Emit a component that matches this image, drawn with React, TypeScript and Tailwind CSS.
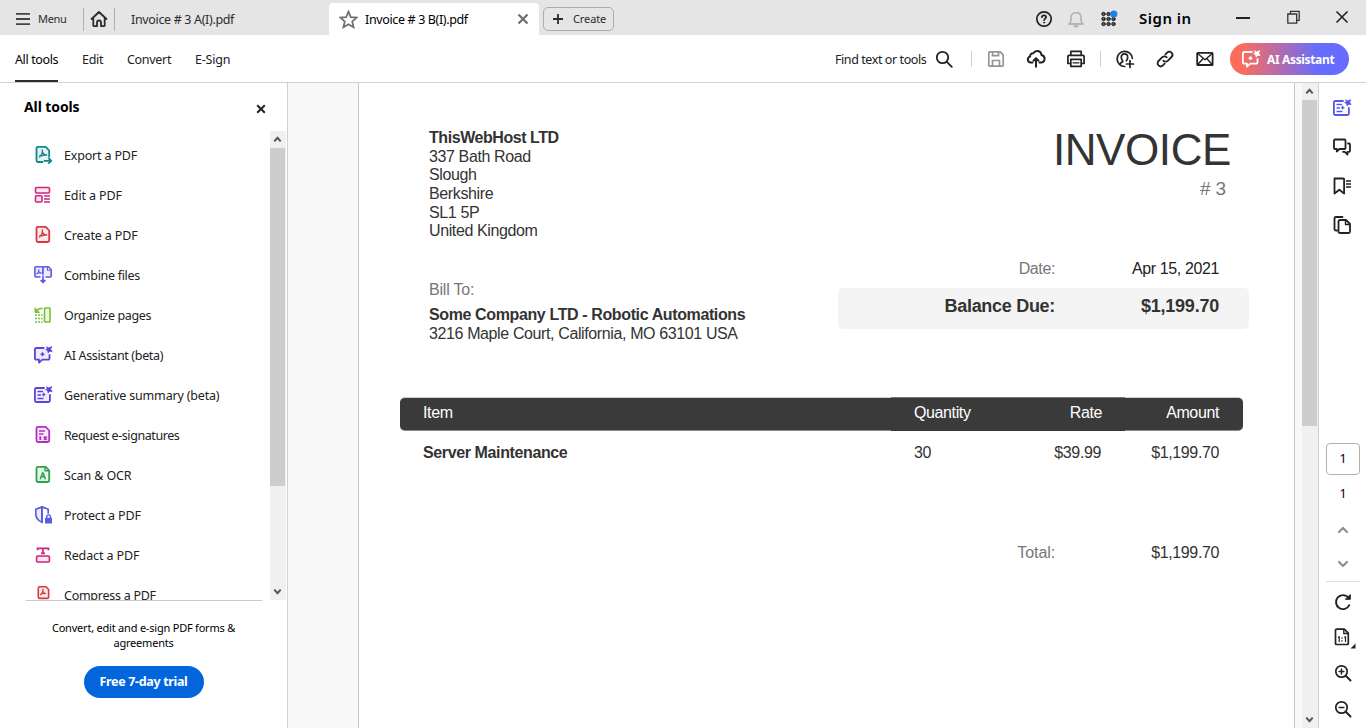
import type { ReactNode } from "react";

type SvgProps = { children: ReactNode; className?: string; w?: number; h?: number; sw?: number };

function Svg({ children, className = "", w = 20, h = 20, sw = 1.8 }: SvgProps) {
  return (
    <svg
      width={w}
      height={h}
      viewBox={`0 0 ${w} ${h}`}
      fill="none"
      stroke="currentColor"
      strokeWidth={sw}
      strokeLinecap="round"
      strokeLinejoin="round"
      className={`block shrink-0 ${className}`}
    >
      {children}
    </svg>
  );
}

const acrobatMark = (
  <path
    d="M9.300 5c.3 2-.6 5-2.700 7M9.400 7c.6 2 2 3 4.300 3M6.800 11l6.600-1.200"
    strokeWidth={1.300}
  />
);

const docShape = "M5 1.800h7.700l3.500 3.700v10a1.500 1.500 0 0 1-1.500 1.500H5a1.500 1.500 0 0 1-1.500-1.500v-12.200a1.500 1.500 0 0 1 1.500-1.500z";

function ExportIcon() {
  return (
    <Svg className="text-[#12868b]">
      <path d={docShape} fill="#e3f2f3" stroke="none" />
      <path d="M9.500 17H5a1.500 1.500 0 0 1-1.500-1.500v-12.200a1.500 1.500 0 0 1 1.500-1.500h7.700l3.500 3.700v6.200" />
      {acrobatMark}
      <path d="M11.500 15.800h6.500M15.900 13.500l2.400 2.300-2.400 2.300" />
    </Svg>
  );
}

function EditIcon() {
  return (
    <Svg className="text-[#cd2680]" sw={1.6}>
      <rect x="2.500" y="2.500" width="14" height="5.500" rx="1" fill="#fbe4f0" />
      <rect x="2.500" y="10.800" width="6.500" height="6.200" rx="1" fill="#fbe4f0" />
      <path d="M11 11h6M11 14h6M11 17h6" strokeWidth={1.500} strokeLinecap="butt" />
    </Svg>
  );
}

function CreateIcon() {
  return (
    <Svg className="text-[#d7373f]">
      <path d={docShape} fill="#fdeaea" />
      {acrobatMark}
    </Svg>
  );
}

function CombineIcon() {
  return (
    <Svg className="text-[#5c5ce0]" sw={1.6}>
      <path d="M7 12H2.900a1 1 0 0 1-1-1V2.800a1 1 0 0 1 1-1h6.100a1 1 0 0 1 1 1V9" fill="#ebebff" />
      <path d="M10 9V2.800a1 1 0 0 1 1-1h4.500l2.700 2.700V11a1 1 0 0 1-1 1H13" fill="#ebebff" />
      <path d="M14.500 2v3.200h3.500M5.800 4.500c.1 2-.7 3.500-2 4.300M5.900 6.500c.6 1 1.500 1.500 2.400 1.500M4.500 8.300l3.500-.5" strokeWidth={1.1} />
      <path d="M10 11v6M8 15.500l2 2 2-2z" strokeWidth={1.700} />
    </Svg>
  );
}

function OrganizeIcon() {
  return (
    <Svg className="text-[#77c33c]" sw={1.6}>
      <rect x="11.500" y="3" width="5.500" height="14" rx=".6" fill="#eefae3" />
      <path d="M2 10h7.500M2 13.500h7.500M2 17h7.500" strokeDasharray="2 1" strokeLinecap="butt" strokeWidth={1.500} />
      <path d="M3.200 6.200C4.500 3.800 6.500 3.400 9 3.500" />
      <path d="M2 3.200v4.300h4.300z" fill="currentColor" strokeWidth={1} />
    </Svg>
  );
}

const sparkle = (
  <path d="M13.800 2l2 1 2.800-1.300-1 2.600 1.400 2.200-2.200-.3-1.700 1.700-.4-2.300-2-1 1.700-.9z" fill="currentColor" strokeWidth={0.9} />
);

function AiIcon({ className = "text-[#5a46d6]", fill = "#efedff" }: { className?: string; fill?: string }) {
  return (
    <Svg className={className}>
      <path
        d="M10.800 3H3.300a1.400 1.400 0 0 0-1.400 1.400v8.900a1.400 1.400 0 0 0 1.400 1.400H6v3l3.300-3h5.800a1.400 1.400 0 0 0 1.400-1.400V9.800"
        fill={fill}
      />
      {sparkle}
      <path d="M9.500 7.300l.7 1.300 1.300.6-1.300.7-.7 1.300-.7-1.300-1.300-.7 1.300-.6z" fill="currentColor" strokeWidth={0.6} />
    </Svg>
  );
}

function SummaryIcon({ className = "text-[#5a46d6]", fill = "#efedff" }: { className?: string; fill?: string }) {
  return (
    <Svg className={className}>
      <path d="M11 3H3.300a1.400 1.400 0 0 0-1.400 1.400v11.200a1.400 1.400 0 0 0 1.400 1.400h12.200a1.400 1.400 0 0 0 1.400-1.400V9.800" fill={fill} />
      {sparkle}
      <path d="M5 6.500h4.500M5 10h2.500M5 13.500h5" strokeWidth={1.300} />
      <path d="M10.700 7.900l.6 1.200 1.200.5-1.200.6-.6 1.200-.6-1.200-1.200-.6 1.200-.5z" fill="currentColor" strokeWidth={0.5} />
    </Svg>
  );
}

function SignIcon() {
  return (
    <Svg className="text-[#b130bd]">
      <path d={docShape} fill="#fae9fb" />
      <path d="M6 6h6M6 9h4.500" strokeWidth={1.400} strokeLinecap="butt" />
      <path d="M7.300 11.300v3.700M10.800 11.800l3 2.900M13.800 11.800l-3 2.900" strokeWidth={1.900} strokeLinecap="butt" />
    </Svg>
  );
}

function ScanIcon() {
  return (
    <Svg className="text-[#2fa14b]">
      <path d={docShape} fill="#e6f6e9" />
      <path d="M12 2v3.800h4" strokeWidth={1.400} />
      <path d="M7.300 13.800L9.800 7.500l2.500 6.300M8.200 11.800h3.200" strokeWidth={1.500} />
    </Svg>
  );
}

function ProtectIcon() {
  return (
    <Svg className="text-[#5c5ce0]" sw={1.700}>
      <path d="M9 17.300C4.800 15.500 2.800 12.500 2.800 9V4.300L9 1.900z" fill="#ebebff" />
      <path d="M9 1.900l6.200 2.400V8" />
      <path d="M9 2v15.300" />
      <rect x="12.600" y="13.300" width="5.800" height="4.700" fill="currentColor" strokeWidth={1.200} />
      <path d="M13.700 13v-1.200a1.900 1.900 0 0 1 3.800 0V13" strokeWidth={1.400} />
    </Svg>
  );
}

function RedactIcon() {
  return (
    <Svg className="text-[#cd2680]" sw={1.600}>
      <path d="M4.500 5.300V3.300h11v2M10 3.500v5M8 8.300h4" strokeWidth={1.700} strokeLinecap="butt" strokeLinejoin="miter" />
      <rect x="3.600" y="11" width="12.800" height="6" rx="1" fill="#fbe4f0" />
    </Svg>
  );
}

function CompressIcon() {
  return (
    <Svg className="text-[#d7373f]" sw={1.600}>
      <path d="M6.700 1.800h6.400l2.500 2.700v7.500a1.400 1.400 0 0 1-1.400 1.400H6.700a1.400 1.400 0 0 1-1.400-1.400V3.200a1.400 1.400 0 0 1 1.400-1.400z" fill="#fdeaea" />
      <path d="M10 4c.1 2-.8 4.500-2.500 5.800M10 6.500c.6 1.300 1.500 2 2.700 2M8 9l4.500-.5" strokeWidth={1.1} />
    </Svg>
  );
}

const tools: { label: string; icon: ReactNode; track: string }[] = [
  { label: "Export a PDF", icon: <ExportIcon />, track: "tracking-[-0.18px]" },
  { label: "Edit a PDF", icon: <EditIcon />, track: "tracking-[-0.12px]" },
  { label: "Create a PDF", icon: <CreateIcon />, track: "tracking-[-0.12px]" },
  { label: "Combine files", icon: <CombineIcon />, track: "tracking-[-0.3px]" },
  { label: "Organize pages", icon: <OrganizeIcon />, track: "tracking-[-0.35px]" },
  { label: "AI Assistant (beta)", icon: <AiIcon />, track: "tracking-[-0.33px]" },
  { label: "Generative summary (beta)", icon: <SummaryIcon />, track: "tracking-[-0.18px]" },
  { label: "Request e-signatures", icon: <SignIcon />, track: "tracking-[-0.43px]" },
  { label: "Scan & OCR", icon: <ScanIcon />, track: "tracking-[-0.12px]" },
  { label: "Protect a PDF", icon: <ProtectIcon />, track: "tracking-[-0.16px]" },
  { label: "Redact a PDF", icon: <RedactIcon />, track: "tracking-[-0.12px]" },
  { label: "Compress a PDF", icon: <CompressIcon />, track: "tracking-[-0.26px]" },
];

function Arrow({ up = false }: { up?: boolean }) {
  return (
    <div className="flex h-[17px] w-[15px] shrink-0 items-center justify-center bg-[#f0f0f0] text-[#555]">
      <Svg w={9} h={7} sw={2}>
        <path d={up ? "M1.300 5.300l3.200-3.500 3.200 3.500" : "M1.300 1.700l3.200 3.500 3.200-3.500"} strokeLinecap="butt" strokeLinejoin="miter" />
      </Svg>
    </div>
  );
}

function TitleBar() {
  return (
    <header className="flex h-[35px] items-center bg-[#e5e5e5] text-[#2c2c2c]">
      <Svg w={16} h={14} sw={1.800} className="ml-[15px] mt-[3px] text-[#444]">
        <path d="M1 1.800h14M1 7h14M1 12.200h14" strokeLinecap="butt" />
      </Svg>
      <span className="ml-[7px] mt-[3px] w-[45px] text-[11px] tracking-[-0.35px]">Menu</span>
      <div className="mt-[3px] h-[23px] w-px bg-[#b1b1b1]" />
      <Svg w={18} h={18} sw={1.800} className="ml-[6px] mt-[2px]">
        <path d="M1.500 9L9 2l7.500 7M3.300 8v7.200a1 1 0 0 0 1 1H7v-3.700a2 2 0 0 1 4 0v3.700h2.700a1 1 0 0 0 1-1V8" />
      </Svg>
      <div className="ml-[6px] mt-[3px] h-[23px] w-px bg-[#b1b1b1]" />
      <span className="ml-4 mt-[5px] w-[198px] text-[12.5px] tracking-[-0.34px]">Invoice # 3 A(I).pdf</span>
      <div className="mt-[3px] flex h-8 w-[210px] items-center rounded-t bg-white">
        <Svg w={19} h={19} sw={1.700} className="ml-[10px] text-[#6e6e6e]">
          <path d="M9.500 1.600l2.300 5.500 5.900.5-4.500 3.900 1.400 5.800-5.100-3.100-5.100 3.100 1.400-5.800L1.300 7.600l5.900-.5z" strokeLinejoin="miter" />
        </Svg>
        <span className="ml-[7px] mt-[2px] w-[152px] text-[12.5px] tracking-[-0.36px] text-black">Invoice # 3 B(I).pdf</span>
        <Svg w={12} h={12} sw={2.200} className="text-[#6e6e6e]">
          <path d="M1.500 1.500l9 9M10.500 1.500l-9 9" strokeLinecap="butt" />
        </Svg>
      </div>
      <div className="ml-1 mt-[3px] flex h-6 w-[71px] items-center rounded-[5px] border border-[#acacac]">
        <Svg w={12} h={12} sw={1.800} className="ml-2 text-[#2c2c2c]">
          <path d="M6 1v10M1 6h10" strokeLinecap="butt" />
        </Svg>
        <span className="ml-[9px] text-[11px] tracking-[-0.1px]">Create</span>
      </div>
      <div className="ml-auto flex items-center">
        <Svg w={18} h={18} sw={1.700} className="mt-[3px] text-[#222]">
          <circle cx="9" cy="9" r="7.200" />
          <path d="M6.900 7.200c0-1.300 1-1.900 2.100-1.900s2.100.7 2.100 1.800c0 1.500-2 1.500-2 3" />
          <circle cx="9.100" cy="12.600" r=".6" fill="currentColor" strokeWidth={0.800} />
        </Svg>
        <Svg w={18} h={18} sw={1.800} className="ml-[14px] mt-[3px] text-[#b5b5b5]">
          <path d="M2 14c1.500-1.200 2-2.500 2-4.500V7.500c0-2.700 1.800-4.800 5-4.800s5 2.100 5 4.800v2c0 2 .5 3.300 2 4.500z" />
          <path d="M7.500 16.200h3" strokeWidth={2.200} />
        </Svg>
        <Svg w={18} h={18} sw={1} className="ml-[15px] mt-[3px] text-[#222]">
          {[4, 9, 14].map((y) => [3.500, 8.500, 13.500].map((x) => <circle key={`${x}-${y}`} cx={x} cy={y} r="1.700" fill="#555" />))}
          <circle cx="13.800" cy="4" r="3.600" fill="#1f7fe8" stroke="none" />
        </Svg>
        <span className="ml-[21px] mt-[2px] w-[97px] text-[15px] font-semibold tracking-[0.5px] text-black">Sign in</span>
        <div className="h-[2px] w-[14px] bg-[#222]" />
        <Svg w={15} h={15} sw={1.300} className="ml-9 text-[#333]">
          <path d="M4.500 3.500V1.300h8.700v9H11M1.800 4h8.900v9.200H1.800z" strokeLinejoin="miter" />
        </Svg>
        <Svg w={14} h={14} sw={1.600} className="ml-[34px] mr-[17px] mt-[-2px] text-[#222]">
          <path d="M1.500 1.500l11 11M12.500 1.500l-11 11" strokeLinecap="butt" />
        </Svg>
      </div>
    </header>
  );
}

function Toolbar() {
  return (
    <nav className="flex h-12 items-center border-b border-[#d0d0d0] bg-white text-[12.5px] text-[#222]">
      <div className="ml-[15px] flex h-full w-[43px] flex-col justify-between whitespace-nowrap">
        <span className="mt-[15px] leading-5 tracking-[-0.37px] text-black">All tools</span>
        <div className="h-[2px] bg-[#2c2c2c]" />
      </div>
      <span className="ml-6 mt-[3px] w-[45px] tracking-[-0.3px]">Edit</span>
      <span className="mt-[3px] w-[68px] tracking-[-0.3px]">Convert</span>
      <span className="mt-[3px] tracking-[-0.2px]">E-Sign</span>
      <div className="ml-auto flex items-center pt-px">
        <span className="mt-[2px] w-[100px] whitespace-nowrap tracking-[-0.42px]">Find text or tools</span>
        <Svg w={18} h={18} sw={1.800}>
          <circle cx="7.500" cy="7.500" r="5.700" />
          <path d="M11.800 11.800l5 5" />
        </Svg>
        <div className="ml-[18px] h-4 w-px bg-[#cfcfcf]" />
        <Svg w={18} h={18} sw={1.700} className="ml-[15px] text-[#959595]">
          <path d="M2.800 1.800h10.400l3 3v10.400a1 1 0 0 1-1 1H2.800a1 1 0 0 1-1-1V2.800a1 1 0 0 1 1-1z" />
          <path d="M5.500 2v3.700h6V2M5.500 16v-5.500h7V16" strokeLinejoin="miter" />
        </Svg>
        <Svg w={20} h={20} sw={2} className="ml-[21px]">
          <path d="M6.500 13.500H4.700a3 3 0 0 1-.6-5.900 3 3 0 0 1 3.200-3.400c1-1.700 2.400-2.200 3.700-2.200 2.500 0 4.200 1.700 4.400 4a3.800 3.800 0 0 1 0 7.500h-1.900" />
          <path d="M10 18.500V9.500M7 12.300l3-3 3 3" strokeLinecap="butt" />
        </Svg>
        <Svg w={20} h={20} sw={1.700} className="ml-5">
          <path d="M4.800 5.500V2.300h10.400v3.200M4.500 14.500H1.900v-7a1.200 1.200 0 0 1 1.200-1.200h13.800a1.200 1.200 0 0 1 1.200 1.200v7h-2.600" />
          <path d="M4.800 10.300h10.400v7H4.800z" />
          <path d="M7 13.800h6" strokeWidth={1.200} />
        </Svg>
        <div className="ml-[14px] h-4 w-px bg-[#cfcfcf]" />
        <Svg w={20} h={20} sw={1.700} className="ml-[14px]">
          <path d="M17.300 9.300A7.600 7.600 0 1 0 9.800 17.500" />
          <path d="M5 15.300c.3-1.400 1.300-2 2.500-2.400.3-.1.400-.7.100-1.100-1.200-1.500-1.500-2.700-1.300-4.100.3-2 1.700-2.800 3.200-2.800s3 .9 3.200 2.800c.2 1.400-.3 2.700-1.300 4.100" />
          <path d="M15 11.500v7M11.500 15h7" />
        </Svg>
        <Svg w={20} h={20} sw={1.800} className="ml-5">
          <path d="M8.300 11.700a3.100 3.100 0 0 0 4.400.1l3.800-3.800a3.100 3.100 0 0 0-4.400-4.400l-1.700 1.700" />
          <path d="M11.700 8.300a3.100 3.100 0 0 0-4.400-.1L3.500 12a3.100 3.100 0 0 0 4.400 4.400l1.700-1.700" />
        </Svg>
        <Svg w={20} h={20} sw={1.800} className="ml-5">
          <rect x="2.200" y="3.800" width="15.400" height="12.200" rx=".6" />
          <path d="M2.700 4.500L10 10.700l7.200-6.200M2.700 15.500l5-5.500M17.200 15.500l-5-5.500" strokeWidth={1.400} />
        </Svg>
        <button className="ml-[15px] mr-[17px] flex h-8 w-[119px] items-center rounded-full bg-[linear-gradient(90deg,#ff6b57_0%,#f76c62_12%,#656cff_75%)] text-white">
          <div className="ml-[11px]">
            <AiIcon className="text-white" fill="none" />
          </div>
          <span className="ml-[6px] mt-px whitespace-nowrap text-[12px] font-bold tracking-[-0.35px]">AI Assistant</span>
        </button>
      </div>
    </nav>
  );
}

function ToolsPanel() {
  return (
    <aside className="flex w-[288px] shrink-0 flex-col border-r border-[#d0d0d0] bg-white">
      <div className="flex h-12 shrink-0 items-start justify-between pl-6 pr-[21px]">
        <h2 className="mt-[14px] text-[14px] font-bold leading-5 tracking-[-0.1px] text-black">All tools</h2>
        <Svg w={10} h={10} sw={2} className="mt-[21px] text-[#222]">
          <path d="M1.200 1.200l7.600 7.600M8.800 1.200L1.200 8.800" strokeLinecap="butt" />
        </Svg>
      </div>
      <div className="flex h-[469px] shrink-0 justify-between">
        <div className="ml-[26px] flex w-[236px] flex-col overflow-hidden pt-1">
          {tools.map((t) => (
            <div key={t.label} className="flex h-10 shrink-0 items-center pl-[7px] text-[#222]">
              {t.icon}
              <span className={`ml-[11px] mt-[2px] whitespace-nowrap text-[12.5px] leading-5 ${t.track}`}>{t.label}</span>
            </div>
          ))}
        </div>
        <div className="mr-px flex w-4 flex-col justify-between bg-[#f0f0f0]">
          <div>
            <Arrow up />
            <div className="h-[338px] w-[15px] bg-[#cdcdcd]" />
          </div>
          <Arrow />
        </div>
      </div>
      <div className="ml-[26px] h-px w-[236px] shrink-0 bg-[#c9c9c9]" />
      <p className="mt-[19px] text-center text-[11px] leading-[15px] tracking-[-0.21px] text-black">
        Convert, edit and e-sign PDF forms &amp;
        <br />
        agreements
      </p>
      <button className="mx-auto mt-4 h-8 w-[120px] whitespace-nowrap rounded-full bg-[#0265dc] pt-px text-[12.5px] font-bold tracking-[-0.33px] text-white">
        Free 7-day trial
      </button>
    </aside>
  );
}

function Invoice() {
  return (
    <article className="h-full w-[937px] shrink-0 border-x border-[#c8c8c8] bg-white font-['Liberation_Sans',Arial,sans-serif] text-[16px] leading-[18.67px] tracking-[-0.38px] text-[#333]">
      <div className="flex h-[260px] pl-[70px]">
        <section className="w-[409px] pt-[46px]">
          <p className="font-bold tracking-[-0.44px]">ThisWebHost LTD</p>
          <p>337 Bath Road</p>
          <p>Slough</p>
          <p>Berkshire</p>
          <p>SL1 5P</p>
          <p>United Kingdom</p>
          <p className="mt-10 tracking-[-0.2px] text-[#777]">Bill To:</p>
          <p className="mt-[6px] font-bold">Some Company LTD - Robotic Automations</p>
          <p className="mt-px">3216 Maple Court, California, MO 63101 USA</p>
        </section>
        <section className="w-[411px] pt-[42px]">
          <h1 className="pr-[18px] text-right text-[44px] leading-[50px] tracking-[-0.4px]">INVOICE</h1>
          <p className="mt-[2px] pr-[23px] text-right text-[19px] leading-6 tracking-[-0.1px] text-[#777]"># 3</p>
          <div className="mt-[59px] flex pr-[30px] text-right">
            <span className="w-[217px] text-[#777]">Date:</span>
            <span className="flex-1 text-[#222]">Apr 15, 2021</span>
          </div>
          <div className="mt-[9px] flex h-[41px] rounded-[5px] bg-[#f4f4f4] pr-[30px] pt-2 text-right text-[18px] font-bold leading-5 tracking-[-0.3px]">
            <span className="w-[217px]">Balance Due:</span>
            <span className="flex-1 tracking-[-0.22px]">$1,199.70</span>
          </div>
        </section>
      </div>
      <div className="ml-[41px] mt-[54px] flex h-[34px] w-[843px] leading-[30px] text-white">
        <div className="w-[491px] rounded-l-[5px] border-b border-t border-b-[#8a8a8a] border-t-[#cfcfcf] bg-[#3a3a3a] pl-[23px]">Item</div>
        <div className="flex w-[234px] justify-between border-b border-t border-b-[#3a3a3a] border-t-[#777] bg-[#3a3a3a] pl-[23px] pr-[23px]">
          <span>Quantity</span>
          <span>Rate</span>
        </div>
        <div className="flex-1 rounded-r-[5px] border-b border-t border-b-[#8a8a8a] border-t-[#cfcfcf] bg-[#3a3a3a] pr-6 text-right">Amount</div>
      </div>
      <div className="ml-[41px] mt-3 flex w-[843px] leading-5">
        <span className="w-[491px] pl-[23px] font-bold">Server Maintenance</span>
        <div className="flex w-[234px] justify-between pl-[23px] pr-6">
          <span>30</span>
          <span>$39.99</span>
        </div>
        <span className="flex-1 pr-6 text-right">$1,199.70</span>
      </div>
      <div className="ml-[41px] mt-20 flex w-[843px] leading-5">
        <span className="w-[655px] text-right tracking-[-0.1px] text-[#777]">Total:</span>
        <span className="flex-1 pr-6 text-right">$1,199.70</span>
      </div>
    </article>
  );
}

function Rail() {
  return (
    <aside className="flex w-12 shrink-0 flex-col items-center border-l border-[#d0d0d0] bg-white pt-[15px] text-[#222]">
      <div className="flex flex-col gap-[19px] pr-[2px]">
        <SummaryIcon className="text-[#5558e8]" fill="none" />
        <Svg>
          <path d="M3 2.500h9.500a1 1 0 0 1 1 1v7.500a1 1 0 0 1-1 1H7.500l-2.700 2.500V12H3a1 1 0 0 1-1-1V3.500a1 1 0 0 1 1-1z" />
          <path d="M16 6.500h1a1 1 0 0 1 1 1v6.300a1 1 0 0 1-1 1h-1.500v2.700l-2.800-2.700H11" />
        </Svg>
        <Svg>
          <path d="M2.500 2.500h8.800a.8.800 0 0 1 .8.800v14.200L7.300 13.700 2.500 17.500z" />
          <path d="M14 5h5M14 8h5M14 11h5" strokeWidth={1.400} strokeLinecap="butt" />
        </Svg>
        <Svg>
          <path d="M5 15.500H4A1.500 1.500 0 0 1 2.500 14V3.500A1.500 1.500 0 0 1 4 2h6.500" />
          <path d="M8 5h6l4 4v7.500a1.500 1.500 0 0 1-1.500 1.500H8a1.500 1.500 0 0 1-1.500-1.500v-10A1.500 1.500 0 0 1 8 5z" />
          <path d="M13.500 5.500V9.500h4" strokeWidth={1.400} />
        </Svg>
      </div>
      <div className="mt-[208px] flex h-8 w-[34px] items-center justify-center rounded border border-[#b1b1b1] pl-px text-[12.5px] text-black">1</div>
      <span className="mt-[9px] pl-px text-[12.5px] leading-5 text-black">1</span>
      <Svg w={12} h={10} sw={2.200} className="mt-[21px] text-[#909090]">
        <path d="M2 7l4-4 4 4" />
      </Svg>
      <Svg w={12} h={10} sw={2.200} className="mt-6 text-[#909090]">
        <path d="M2 3l4 4 4-4" />
      </Svg>
      <div className="mt-3 h-px w-[34px] bg-[#dedede]" />
      <Svg className="mt-[10px]" sw={1.900}>
        <path d="M16.300 13.200A7 7 0 1 1 15 5.200" />
        <path d="M17.300 3v4.300h-4.600z" fill="currentColor" strokeWidth={1} />
      </Svg>
      <div className="mt-4 flex pl-[5px]">
        <Svg w={16} h={18} sw={1.700}>
          <path d="M2.500 1.200h7.800l4 4v10.300a1 1 0 0 1-1 1H2.500a1 1 0 0 1-1-1V2.200a1 1 0 0 1 1-1z" />
          <path d="M9.800 1.500v4h4" strokeWidth={1.400} />
          <path d="M4 9.500l1.200-.8V14M10.300 9.500l1.200-.8V14" strokeWidth={1.200} strokeLinecap="butt" />
          <path d="M8 10v.3M8 12.700v.3" strokeWidth={1.300} />
        </Svg>
        <Svg w={6} h={6} sw={0} className="mt-[15px]">
          <path d="M5.500 .5v5H.5z" fill="currentColor" stroke="none" />
        </Svg>
      </div>
      <Svg className="mt-[14px]" sw={1.700}>
        <circle cx="8.500" cy="8.500" r="5.700" />
        <path d="M13 13l4.500 4.500" strokeWidth={2} />
        <path d="M8.500 6.100v4.800M6.100 8.500h4.800" strokeWidth={1.500} />
      </Svg>
      <Svg className="mt-4" sw={1.700}>
        <circle cx="8.500" cy="8.500" r="5.700" />
        <path d="M13 13l4.500 4.500" strokeWidth={2} />
        <path d="M6.100 8.500h4.800" strokeWidth={1.500} />
      </Svg>
    </aside>
  );
}

export default function App() {
  return (
    <div className="flex h-[728px] w-[1366px] flex-col overflow-hidden bg-white font-['Noto_Sans','Open_Sans',sans-serif]">
      <TitleBar />
      <Toolbar />
      <main className="flex min-h-0 flex-1">
        <ToolsPanel />
        <div className="flex flex-1 bg-[#f8f8f8] pl-[70px]">
          <Invoice />
          <div className="ml-[7px] flex w-4 flex-col justify-between bg-[#f0f0f0]">
            <div>
              <Arrow up />
              <div className="h-[326px] w-[15px] bg-[#cdcdcd]" />
            </div>
            <Arrow />
          </div>
        </div>
        <Rail />
      </main>
    </div>
  );
}
